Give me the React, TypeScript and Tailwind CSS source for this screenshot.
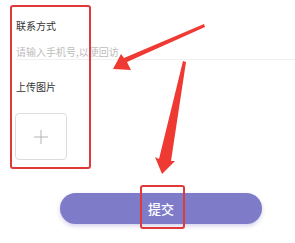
export default function App() {
  return (
    <div
      className="relative w-[295px] h-[243px] bg-white overflow-hidden"
      style={{ fontFamily: '"Noto Sans CJK SC", "Noto Sans", sans-serif' }}
    >
      <div className="pt-[19px]">
        <div className="pl-4 text-[10px] leading-[14px] text-[#333]">联系方式</div>
        <div className="mt-[12px] ml-4 border-b border-[#f0f0f0] text-[10px] leading-[14px] text-[#bdbdbd]">
          请输入手机号,以便回访
        </div>
        <div className="mt-[20px] pl-4 text-[10px] leading-[14px] text-[#333]">上传图片</div>
        <div className="mt-[19px] ml-[15px] w-[52px] h-[47px] rounded-[4px] border border-[#dcdcdc] flex items-center justify-center">
          <svg width="14" height="14" viewBox="0 0 14 14">
            <path d="M7 0v14M0 7h14" stroke="#b5b5b5" strokeWidth="1" />
          </svg>
        </div>
        <div className="mt-[33px] ml-[60px] w-[202px] h-[31px] rounded-full bg-[#7e7cc9] flex items-center justify-center text-white text-[13px] font-medium shadow-[0_2px_4px_rgba(126,124,201,0.35)]">
          提交
        </div>
      </div>

      {/* annotations */}
      <div className="absolute left-[10px] top-[5px] w-[81px] h-[164px] border-[2px] border-[#e0393a] rounded-[3px]" />
      <div className="absolute left-[140px] top-[185px] w-[45px] h-[44px] border-[2px] border-[#e0393a] rounded-[3px]" />
      <svg className="absolute inset-0" width="295" height="243" viewBox="0 0 295 243">
        <polygon points="204,24 205,27 127,62 131,70 113,69 121,54 124,58" fill="#ee3a32" />
        <polygon points="183,61 186,62 171,161 175,161 162,174 155,157 159,159" fill="#ee3a32" />
      </svg>
    </div>
  );
}
